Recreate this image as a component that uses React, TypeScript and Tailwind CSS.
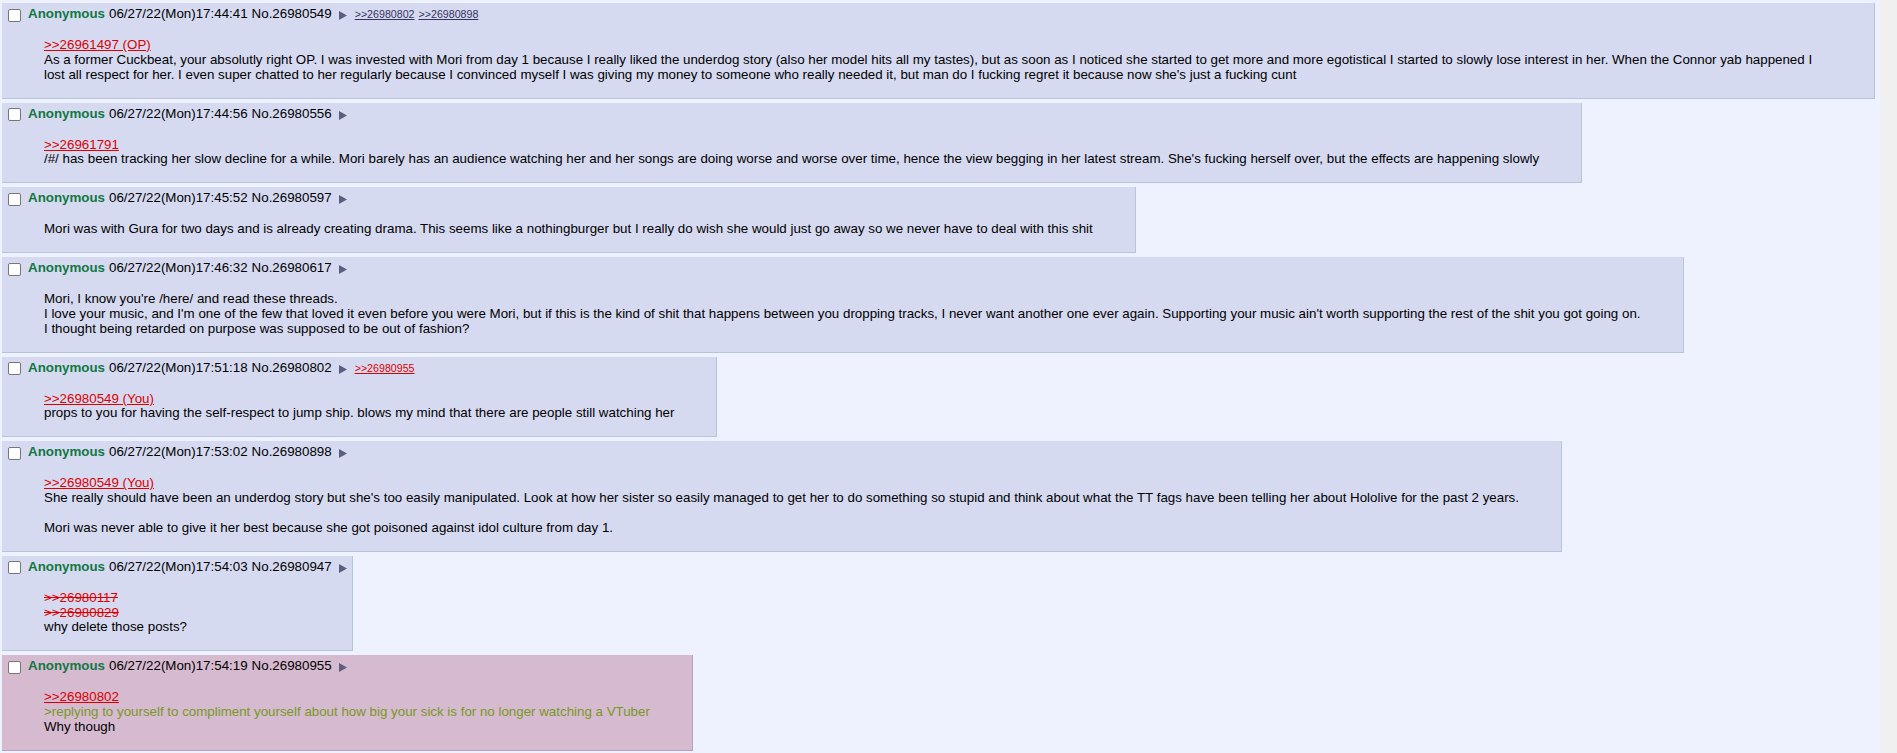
import type { ReactNode } from 'react';

type Line = { kind: 'text' | 'quote' | 'dead' | 'green' | 'blank'; text: string };

type Post = {
  id: string;
  time: string;
  backlinks?: { no: string; red?: boolean }[];
  highlight?: boolean;
  lines: Line[];
};

const posts: Post[] = [
  {
    id: '26980549',
    time: '06/27/22(Mon)17:44:41',
    backlinks: [{ no: '26980802' }, { no: '26980898' }],
    lines: [
      { kind: 'quote', text: '>>26961497 (OP)' },
      {
        kind: 'text',
        text: "As a former Cuckbeat, your absolutly right OP. I was invested with Mori from day 1 because I really liked the underdog story (also her model hits all my tastes), but as soon as I noticed she started to get more and more egotistical I started to slowly lose interest in her. When the Connor yab happened I lost all respect for her. I even super chatted to her regularly because I convinced myself I was giving my money to someone who really needed it, but man do I fucking regret it because now she's just a fucking cunt",
      },
    ],
  },
  {
    id: '26980556',
    time: '06/27/22(Mon)17:44:56',
    lines: [
      { kind: 'quote', text: '>>26961791' },
      {
        kind: 'text',
        text: "/#/ has been tracking her slow decline for a while. Mori barely has an audience watching her and her songs are doing worse and worse over time, hence the view begging in her latest stream. She's fucking herself over, but the effects are happening slowly",
      },
    ],
  },
  {
    id: '26980597',
    time: '06/27/22(Mon)17:45:52',
    lines: [
      {
        kind: 'text',
        text: 'Mori was with Gura for two days and is already creating drama. This seems like a nothingburger but I really do wish she would just go away so we never have to deal with this shit',
      },
    ],
  },
  {
    id: '26980617',
    time: '06/27/22(Mon)17:46:32',
    lines: [
      { kind: 'text', text: "Mori, I know you're /here/ and read these threads." },
      {
        kind: 'text',
        text: "I love your music, and I'm one of the few that loved it even before you were Mori, but if this is the kind of shit that happens between you dropping tracks, I never want another one ever again. Supporting your music ain't worth supporting the rest of the shit you got going on.",
      },
      { kind: 'text', text: 'I thought being retarded on purpose was supposed to be out of fashion?' },
    ],
  },
  {
    id: '26980802',
    time: '06/27/22(Mon)17:51:18',
    backlinks: [{ no: '26980955', red: true }],
    lines: [
      { kind: 'quote', text: '>>26980549 (You)' },
      { kind: 'text', text: 'props to you for having the self-respect to jump ship. blows my mind that there are people still watching her' },
    ],
  },
  {
    id: '26980898',
    time: '06/27/22(Mon)17:53:02',
    lines: [
      { kind: 'quote', text: '>>26980549 (You)' },
      {
        kind: 'text',
        text: "She really should have been an underdog story but she's too easily manipulated. Look at how her sister so easily managed to get her to do something so stupid and think about what the TT fags have been telling her about Hololive for the past 2 years.",
      },
      { kind: 'blank', text: '' },
      { kind: 'text', text: 'Mori was never able to give it her best because she got poisoned against idol culture from day 1.' },
    ],
  },
  {
    id: '26980947',
    time: '06/27/22(Mon)17:54:03',
    lines: [
      { kind: 'dead', text: '>>26980117' },
      { kind: 'dead', text: '>>26980829' },
      { kind: 'text', text: 'why delete those posts?' },
    ],
  },
  {
    id: '26980955',
    time: '06/27/22(Mon)17:54:19',
    highlight: true,
    lines: [
      { kind: 'quote', text: '>>26980802' },
      { kind: 'green', text: '>replying to yourself to compliment yourself about how big your sick is for no longer watching a VTuber' },
      { kind: 'text', text: 'Why though' },
    ],
  },
];

function renderLine(line: Line): ReactNode {
  if (line.kind === 'quote') return <a className="text-[#dd0000] underline">{line.text}</a>;
  if (line.kind === 'dead') return <span className="text-[#dd0000] line-through">{line.text}</span>;
  if (line.kind === 'green') return <span className="text-[#789922]">{line.text}</span>;
  if (line.kind === 'blank') return null;
  return <span>{line.text}</span>;
}

function PostBox({ post }: { post: Post }) {
  return (
    <div
      className={
        post.highlight
          ? 'w-fit border-r border-b border-[#ba9dbf] bg-[#d6bad0] p-[2px]'
          : 'w-fit border-r border-b border-[#b7c5d9] bg-[#d6daf0] p-[2px]'
      }
    >
      <div className="flex h-[20px] items-center whitespace-nowrap">
        <input
          type="checkbox"
          className="ml-[4px] mr-[7px] h-[13px] w-[13px] shrink-0 appearance-none rounded-[2px] border border-[#767676] bg-white"
        />
        <span>
          <span className="font-bold text-[#117743]">Anonymous</span>
          <span className="ml-[4px]">{post.time}</span>
          <span className="ml-[4px]">No.{post.id}</span>
          <span className="ml-[5px] inline-block w-[13px] text-center align-[-1px]">
            <svg width="8" height="9" viewBox="0 0 8 9" className="inline-block">
              <polygon points="0,0 8,4.5 0,9" fill="#5d5d7f" />
            </svg>
          </span>
          {post.backlinks ? (
            <span className="ml-[5px] text-[10.67px]">
              {post.backlinks.map((b) => (
                <a
                  key={b.no}
                  className={b.red ? 'mr-[4px] text-[#dd0000] underline' : 'mr-[4px] text-[#34345c] underline'}
                >
                  &gt;&gt;{b.no}
                </a>
              ))}
            </span>
          ) : null}
        </span>
      </div>
      <blockquote className="mx-[40px] my-[13px]">
        {post.lines.map((line, i) => (
          <div key={i} className="min-h-[14.85px]">
            {renderLine(line)}
          </div>
        ))}
      </blockquote>
    </div>
  );
}

export default function App() {
  return (
    <div
      className="flex h-[753px] w-[1897px] overflow-hidden text-[13.33px] leading-[14.85px] text-black"
      style={{ fontFamily: '"Liberation Sans", Arial, sans-serif' }}
    >
      <div className="flex w-[1880px] flex-col gap-[4px] bg-[#eef2ff] pl-[2px] pr-[5px] pt-[3px]">
        {posts.map((post) => (
          <PostBox key={post.id} post={post} />
        ))}
      </div>
      <div className="w-[17px] bg-[#f0f0f0]" />
    </div>
  );
}
